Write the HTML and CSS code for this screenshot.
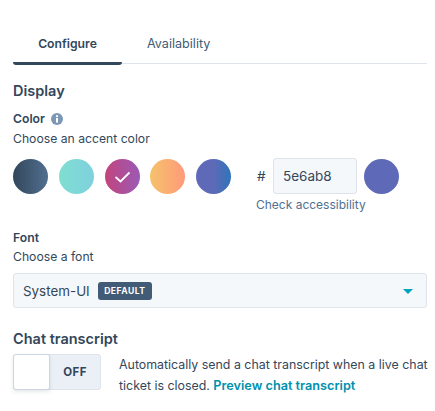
FILE: index.html
```html
<!DOCTYPE html>
<html lang="en">
<head>
<meta charset="utf-8">
<title>Configure</title>
<link rel="stylesheet" href="styles.css">
</head>
<body>
<div class="page">
  <nav class="tabs">
    <span class="tab tab-active">Configure</span>
    <span class="tab">Availability</span>
  </nav>
  <h2 class="section-title">Display</h2>
  <div class="label-row">
    <span class="label">Color</span>
    <svg class="info" viewBox="0 0 12 12" width="12" height="12" aria-hidden="true"><circle cx="6" cy="6" r="6" fill="#7c98b6"/><circle cx="6" cy="3.2" r="1.1" fill="#fff"/><rect x="5" y="5" width="2" height="4.6" fill="#fff"/></svg>
  </div>
  <div class="help">Choose an accent color</div>
  <div class="color-row">
    <div class="swatches">
      <span class="swatch s1"></span>
      <span class="swatch s2"></span>
      <span class="swatch s3"><svg viewBox="0 0 35 35" width="35" height="35" aria-hidden="true"><path d="M10.5 18 L15.5 22.5 L24.5 13.5" fill="none" stroke="#fff" stroke-width="1.8"/></svg></span>
      <span class="swatch s4"></span>
      <span class="swatch s5"></span>
    </div>
    <div class="custom">
      <div class="custom-top">
        <span class="hash">#</span>
        <span class="hex-input">5e6ab8</span>
        <span class="swatch s6"></span>
      </div>
      <a class="check">Check accessibility</a>
    </div>
  </div>
  <div class="label font-label">Font</div>
  <div class="help font-help">Choose a font</div>
  <div class="select">
    <span class="select-value">System-UI</span>
    <span class="badge">DEFAULT</span>
    <span class="caret"></span>
  </div>
  <h3 class="sub-title">Chat transcript</h3>
  <div class="transcript">
    <div class="toggle"><span class="thumb"></span><span class="toggle-text">OFF</span></div>
    <p class="desc">Automatically send a chat transcript when a live chat ticket is closed. <a class="link">Preview chat transcript</a></p>
  </div>
</div>
</body>
</html>
```
FILE: styles.css
```css
* { box-sizing: border-box; }
html, body { margin: 0; background: #fff; }
body { font-family: Inter, "Open Sans", "Liberation Sans", sans-serif; color: #33475b; font-size: 12.2px; }
.page { width: 435px; height: 411px; overflow: hidden; padding: 24px 0 0 13px; }
.tabs { display: flex; width: 414px; height: 40px; border-bottom: 1px solid #dfe3eb; }
.tab { height: 41px; font-size: 12.2px; line-height: 18px; color: #425b76; }
.tab-active { width: 109px; font-weight: 600; color: #33475b; border-bottom: 3px solid #33475b; border-radius: 0 0 3px 3px; text-align: center; padding: 11px 0 0; }
.tab + .tab { padding: 11px 0 0 25px; font-size: 12.6px; }
.section-title { margin: 17px 0 0; font-size: 14.5px; line-height: 20px; font-weight: 600; }
.label-row { display: flex; align-items: center; gap: 6px; margin-top: 9px; height: 18px; }
.label { font-size: 12.2px; font-weight: 600; line-height: 18px; }
.help { font-size: 12.2px; line-height: 18px; margin-top: 2px; color: #33475b; }
.font-help { margin-top: 1px; }
.color-row { display: flex; margin-top: 10px; height: 54px; }
.swatches { display: flex; gap: 10.75px; margin-top: 1px; height: 35px; }
.swatch { display: block; width: 35px; height: 35px; border-radius: 50%; flex: none; }
.s1 { background: linear-gradient(90deg, #33475b, #516f90); }
.s2 { background: linear-gradient(90deg, #7fded1, #7fd1de); }
.s3 { background: linear-gradient(90deg, #c2457d, #9b59b6); }
.s4 { background: linear-gradient(90deg, #f5c26b, #ff9a7b); }
.s5 { background: linear-gradient(90deg, #5e6ab8, #5e6ab8 50%, #2f74b8); }
.s6 { background: #5e6ab8; margin-left: 7px; }
.custom { margin-left: 25px; }
.custom-top { display: flex; align-items: center; height: 36px; }
.hash { width: 17px; font-size: 13.5px; padding-left: 1px; }
.hex-input { width: 84px; height: 36px; line-height: 34px; padding-left: 9px; font-size: 13.5px; background: #f5f8fa; border: 1px solid #dfe3eb; border-radius: 3px; }
.check { display: block; margin-top: 2px; font-size: 12px; line-height: 18px; color: #516f90; }
.font-label { margin-top: 17px; }
.select { display: flex; align-items: center; position: relative; width: 414px; height: 35px; margin-top: 7px; padding-left: 9px; background: #f5f8fa; border: 1px solid #dfe3eb; border-radius: 3px; }
.select-value { font-size: 13.4px; }
.badge { margin-left: 8px; height: 18px; padding: 0 6.5px; line-height: 18px; font-size: 8.6px; font-weight: 700; letter-spacing: .45px; color: #fff; background: #425b76; border-radius: 3px; }
.caret { position: absolute; right: 13px; top: 15px; border-left: 5.5px solid transparent; border-right: 5.5px solid transparent; border-top: 5.5px solid #00a4bd; }
.sub-title { margin: 21px 0 0; font-size: 14.5px; line-height: 20px; font-weight: 600; }
.transcript { display: flex; margin-top: 5px; }
.toggle { position: relative; flex: none; width: 88px; height: 36px; display: flex; justify-content: flex-end; align-items: center; background: #eaf0f6; border: 1px solid #dfe3eb; border-radius: 3px; }
.thumb { position: absolute; left: -1px; top: -1px; width: 37px; height: 36px; background: #fff; border: 1px solid #cbd6e2; border-radius: 3px; box-shadow: 0 2px 4px rgba(45,62,80,.12); }
.toggle-text { width: 50px; text-align: center; font-size: 11.5px; font-weight: 700; letter-spacing: .4px; }
.desc { margin: 0 0 0 18px; font-size: 12.4px; line-height: 21px; }
.link { color: #0091ae; font-weight: 600; font-size: 12.7px; }
```
